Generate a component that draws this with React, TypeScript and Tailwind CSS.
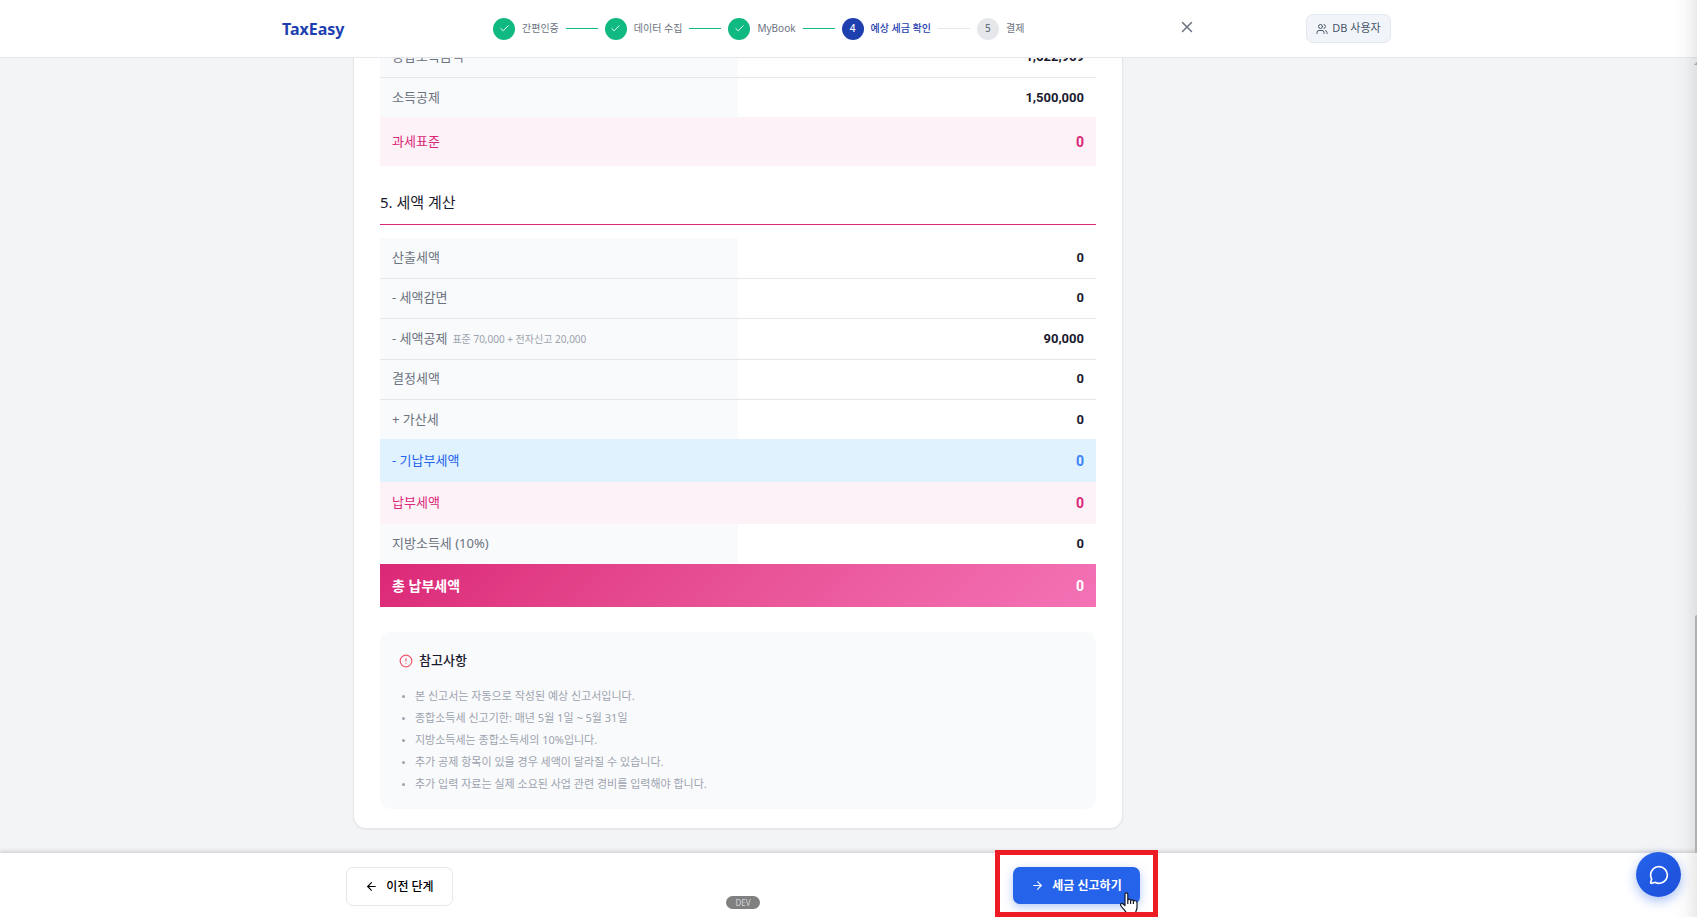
import React from 'react';
import { ArrowLeft, ArrowRight, Check, CircleAlert, MessageCircle, Users, X } from 'lucide-react';

interface Step {
  label: string;
  status: 'done' | 'current' | 'todo';
}

interface TaxRow {
  label: string;
  value: string;
  note?: string;
  variant?: 'plain' | 'noted' | 'base' | 'prepaid' | 'due' | 'total';
}

const steps: Step[] = [
  { label: '간편인증', status: 'done' },
  { label: '데이터 수집', status: 'done' },
  { label: 'MyBook', status: 'done' },
  { label: '예상 세금 확인', status: 'current' },
  { label: '결제', status: 'todo' },
];

const incomeRows: TaxRow[] = [
  { label: '종합소득금액', value: '1,622,969' },
  { label: '소득공제', value: '1,500,000' },
  { label: '과세표준', value: '0', variant: 'base' },
];

const taxRows: TaxRow[] = [
  { label: '산출세액', value: '0' },
  { label: '- 세액감면', value: '0' },
  { label: '- 세액공제', value: '90,000', note: '표준 70,000 + 전자신고 20,000', variant: 'noted' },
  { label: '결정세액', value: '0' },
  { label: '+ 가산세', value: '0' },
  { label: '- 기납부세액', value: '0', variant: 'prepaid' },
  { label: '납부세액', value: '0', variant: 'due' },
  { label: '지방소득세 (10%)', value: '0' },
  { label: '총 납부세액', value: '0', variant: 'total' },
];

const notices = [
  '본 신고서는 자동으로 작성된 예상 신고서입니다.',
  '종합소득세 신고기한: 매년 5월 1일 ~ 5월 31일',
  '지방소득세는 종합소득세의 10%입니다.',
  '추가 공제 항목이 있을 경우 세액이 달라질 수 있습니다.',
  '추가 입력 자료는 실제 소요된 사업 관련 경비를 입력해야 합니다.',
];

const rowStyles = {
  plain: {
    row: 'h-10 border-t border-[#e5e7eb] first:border-t-0',
    label: 'bg-[#f9fafb] font-normal text-[#6b7280]',
    value: 'text-[13px] text-[#1a1a2e]',
  },
  noted: {
    row: 'h-[41px] border-t border-[#e5e7eb]',
    label: 'bg-[#f9fafb] font-normal text-[#6b7280]',
    value: 'text-[13px] text-[#1a1a2e]',
  },
  base: {
    row: 'h-[49px] bg-[#fdf2f8]',
    label: 'font-normal text-[#db2777]',
    value: 'text-sm text-[#db2777]',
  },
  prepaid: {
    row: 'h-[43px] bg-[#e0f2fe]',
    label: 'font-normal text-[#2563eb]',
    value: 'text-sm text-[#3b82f6]',
  },
  due: {
    row: 'h-[42px] bg-[#fdf2f8]',
    label: 'font-normal text-[#db2777]',
    value: 'text-sm text-[#db2777]',
  },
  total: {
    row: 'h-[43px] bg-linear-135 from-[#db2777] to-[#f472b6]',
    label: 'text-sm font-bold text-white',
    value: 'text-sm text-white',
  },
};

const TaxTable: React.FC<{ rows: TaxRow[]; label: string }> = ({ rows, label }) => (
  <table aria-label={label} className="w-full table-fixed border-collapse text-[13px]">
    <tbody>
      {rows.map((row, index) => {
        const style = rowStyles[row.variant ?? 'plain'];
        // the local tax row follows a coloured one and has no divider
        const afterColored = rows[index - 1]?.variant === 'due' ? 'border-t-0' : '';
        return (
          <tr key={row.label} className={`${style.row} ${afterColored}`}>
            <th scope="row" className={`px-3 text-left ${style.label}`}>
              {row.label}
              {row.note && <span className="ml-[5px] text-[10px] text-[#9ca3af]">{row.note}</span>}
            </th>
            <td className={`px-3 text-right font-[Roboto] font-bold ${style.value}`}>{row.value}</td>
          </tr>
        );
      })}
    </tbody>
  </table>
);

const StepItem: React.FC<{ step: Step; number: number }> = ({ step, number }) => {
  const circle = {
    done: 'bg-[#10b981] text-white',
    current: 'bg-[#1e40af] text-white',
    todo: 'bg-[#e5e7eb] text-[#6b7280]',
  }[step.status];
  const text = step.status === 'current' ? 'font-medium text-[#1e40af]' : 'text-[#6b7280]';

  return (
    <>
      <span className={`flex size-[22px] items-center justify-center rounded-full text-[10px] font-medium ${circle}`}>
        {step.status === 'done' ? <Check size={11} /> : number}
      </span>
      <span className={`text-[10px] ${text}`}>{step.label}</span>
    </>
  );
};

const Header: React.FC = () => (
  <header className="z-10 h-[58px] shrink-0 border-b border-[#e5e7eb] bg-white pr-6">
    <div className="mx-auto flex h-full max-w-[1109px] items-center">
      <a href="#" className="w-[211px] text-base font-bold text-[#1e40af]">TaxEasy</a>
      <ol className="flex items-center gap-[7px]">
        {steps.map((step, index) => (
          <li key={step.label} className="flex h-[23px] items-center gap-[7px] whitespace-nowrap">
            <StepItem step={step} number={index + 1} />
            {index < steps.length - 1 && (
              <span className={`h-px w-8 ${step.status === 'done' ? 'bg-[#10b981]' : 'bg-[#e5e7eb]'}`}></span>
            )}
          </li>
        ))}
      </ol>
      <button type="button" aria-label="닫기" className="mr-[110px] ml-auto pb-[3px] text-[#6b7280]">
        <X size={18} />
      </button>
      <button
        type="button"
        className="flex h-[29px] w-[85px] items-center justify-center gap-1 rounded-[7px] border border-[#e2e8f0] bg-[#f1f5f9] text-[11px] text-[#475569]"
      >
        <Users size={12} />
        DB 사용자
      </button>
    </div>
  </header>
);

const HandCursor: React.FC = () => (
  <svg className="absolute top-[25px] left-[106px]" width="20" height="24" viewBox="0 0 20 24" aria-hidden="true">
    <path
      d="M6 2.2C6 .3 8.8 .3 8.8 2.2V8c.3-1.2 2.8-1 2.8.5.4-1 2.8-.8 2.8.7.5-.9 3.6-.6 3.6 1.1v5.2c0 2.6-1.6 3.5-1.6 6.5H7.5c0-2.500-3.600-5-5.600-8.200-1.300-2 1-3.200 2.500-1.600L6 13.600Z"
      fill="#fff"
      stroke="#111827"
      strokeWidth="1.2"
      strokeLinejoin="round"
    />
    <path d="M8.8 8v4M11.6 8.5V12M14.4 9.2V12" stroke="#111827" strokeWidth="1.2" />
  </svg>
);

const Footer: React.FC = () => (
  <footer className="z-10 h-16 shrink-0 bg-white pr-[211px] shadow-[0_-2px_4px_rgba(0,0,0,0.14)]">
    <div className="relative mx-auto flex max-w-[794px] items-start justify-between pt-[14px]">
      <button
        type="button"
        className="flex h-[39px] w-[107px] items-center justify-center gap-2 rounded-[7px] border border-[#e5e7eb] bg-white text-xs font-medium text-black"
      >
        <ArrowLeft size={13} />
        이전 단계
      </button>
      <span className="absolute top-[43px] left-1/2 flex h-[13px] w-[34px] -translate-x-1/2 items-center justify-center rounded-full bg-[#808080] text-[8px] text-gray-300">
        DEV
      </span>
      <div className="relative">
        <button
          type="button"
          className="flex h-[37px] w-[127px] items-center justify-center gap-2 rounded-[7px] bg-[#2563eb] text-xs font-bold text-white shadow-[0_3px_10px_rgba(37,99,235,0.35)]"
        >
          <ArrowRight size={13} />
          세금 신고하기
        </button>
        <HandCursor />
        <div className="pointer-events-none absolute -top-[17px] -right-[18px] -bottom-[13px] -left-[18px] border-5 border-[#ed1c24]"></div>
      </div>
    </div>
  </footer>
);

const App: React.FC = () => (
  <div
    lang="ko"
    className="relative flex h-screen flex-col overflow-hidden bg-[#f3f4f6] font-['Noto_Sans','Noto_Sans_CJK_KR',sans-serif]"
  >
    <Header />

    <main className="flex min-h-0 flex-1 flex-col justify-end pr-[221px] pb-6">
      <article className="mx-auto w-full max-w-[770px] rounded-b-[13px] border border-[#e5e7eb] bg-white px-[26px] pb-[19px] shadow-xs">
        <TaxTable rows={incomeRows} label="과세표준" />

        <h2 className="mt-6 mb-[13px] flex h-[35px] items-start border-b border-[#db2777] text-[15px] leading-6 font-normal text-[#1a1a2e]">
          5. 세액 계산
        </h2>
        <TaxTable rows={taxRows} label="세액 계산" />

        <section className="mt-[25px] rounded-[10px] bg-[#f9fafb] px-[19px] pt-[19px] pb-[14px]">
          <h3 className="flex h-5 items-center gap-[6px] text-[13px] font-medium text-[#1a1a2e]">
            <CircleAlert size={14} className="text-[#f5576c]" />
            참고사항
          </h3>
          <ul className="mt-[14px] list-disc pl-4 text-[11px] leading-[22px] text-[#9ca3af] marker:text-[8px]">
            {notices.map((notice) => (
              <li key={notice}>{notice}</li>
            ))}
          </ul>
        </section>
      </article>
    </main>

    <Footer />

    {/* shade and scrollbar along the right edge */}
    <div className="pointer-events-none absolute inset-y-0 right-0 z-20 w-6 bg-linear-to-r from-transparent via-black/2 to-black/8"></div>
    <svg className="absolute top-[62px] right-0 z-20" width="3" height="3" viewBox="0 0 3 3" aria-hidden="true">
      <path d="M0 3L3 0V3Z" fill="#a3a3a3" />
    </svg>
    <div className="absolute right-0 bottom-16 z-20 h-[238px] w-[2px] rounded-tl-full bg-[#b0b0b0]"></div>

    <button
      type="button"
      aria-label="채팅 상담"
      className="absolute right-4 bottom-5 z-30 flex size-[45px] items-center justify-center rounded-full bg-linear-135 from-[#2563eb] to-[#1d4ed8] text-white shadow-[0_4px_12px_rgba(37,99,235,0.4)]"
    >
      <MessageCircle size={20} />
    </button>
  </div>
);

export default App;
